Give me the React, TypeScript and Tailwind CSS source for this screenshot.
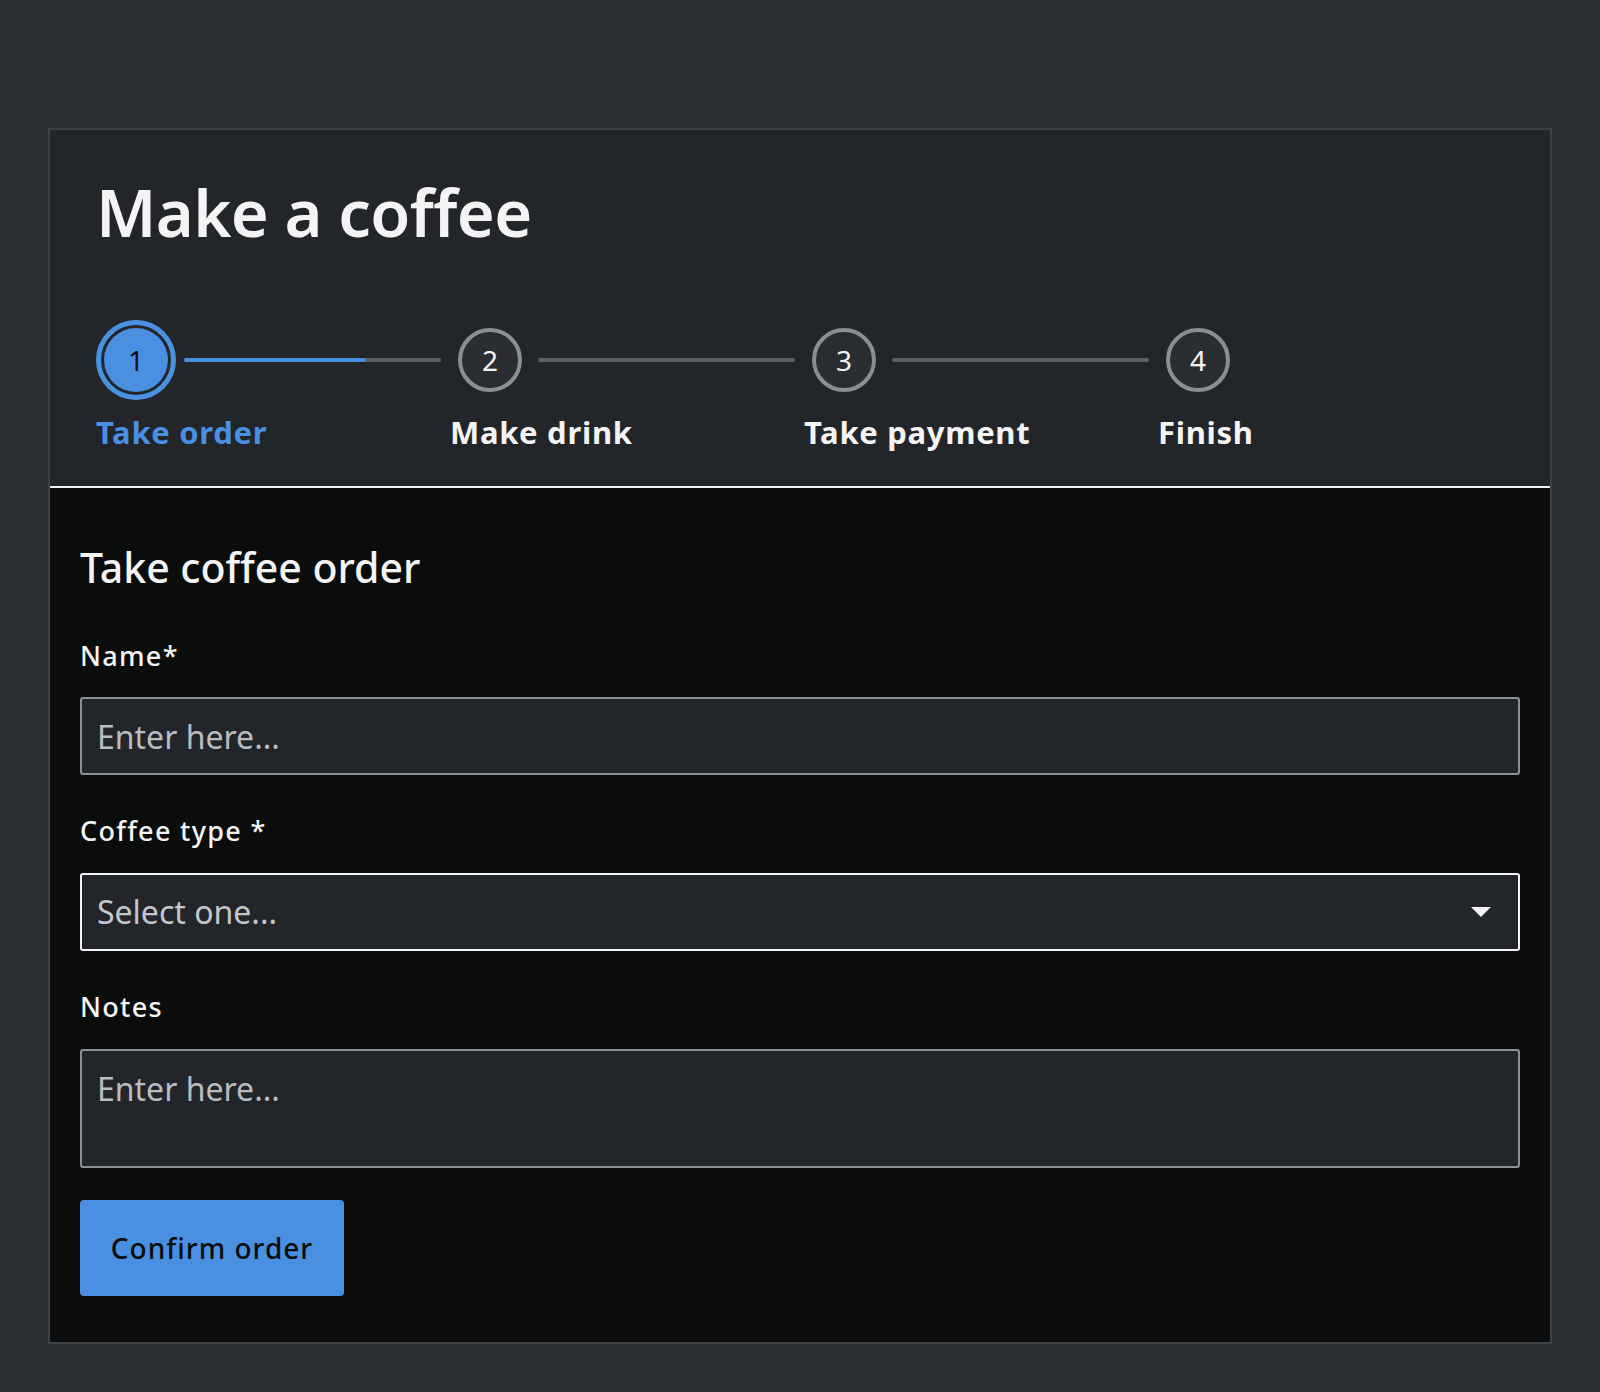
import { useState } from "react";

const font = { fontFamily: '"Noto Sans", "Open Sans", sans-serif' };

const steps = ["Take order", "Make drink", "Take payment", "Finish"];

const StepCircle = ({ index, active }: { index: number; active: boolean }) =>
  active ? (
    <div className="ml-2 flex size-16 shrink-0 items-center justify-center rounded-full bg-[#4a90e2] text-[28px] leading-none text-[#0b0d0d] outline-[5px] outline-offset-[3px] outline-solid outline-[#4a90e2]">
      {index + 1}
    </div>
  ) : (
    <div className="ml-2 flex size-16 shrink-0 items-center justify-center rounded-full border-4 border-[#8a8f96] bg-[#2a2d32] text-[28px] leading-none text-[#f4f4f4]">
      {index + 1}
    </div>
  );

const Stepper = ({ current }: { current: number }) => (
  <div>
    <div className="mt-[76px] flex items-center">
      {steps.map((label, i) => (
        <div
          className={i < steps.length - 1 ? "flex w-[354px] items-center" : "flex items-center"}
          key={label}
        >
          <StepCircle active={i === current} index={i} />
          {i < steps.length - 1 && (
            <div className="ml-4 mr-[9px] h-1 flex-1 overflow-hidden rounded-full bg-[#5a5f66]">
              {i === current && (
                <div className="h-full w-[71%] rounded-full bg-[#4a90e2]" />
              )}
            </div>
          )}
        </div>
      ))}
    </div>
    <div className="mt-5 flex">
      {steps.map((label, i) => (
        <div
          className={
            i === current
              ? "w-[354px] text-[31px] font-bold leading-[40px] tracking-[0.7px] text-[#4a90e2]"
              : "w-[354px] text-[31px] font-bold leading-[40px] tracking-[0.7px] text-[#f4f4f4]"
          }
          key={label}
        >
          {label}
        </div>
      ))}
    </div>
  </div>
);

const Label = ({ children, className }: { children: string; className: string }) => (
  <label className={`block text-[27px] font-medium leading-[36px] tracking-[1.3px] text-[#f4f4f4] ${className}`}>
    {children}
  </label>
);

export default function App() {
  const [name, setName] = useState("");
  const [coffee, setCoffee] = useState("");
  const [notes, setNotes] = useState("");

  return (
    <div className="min-h-screen bg-[#2c2f34] px-12 pb-12 pt-32" style={font}>
      <div className="border-2 border-[#3d4046]">
        <div className="border-b-2 border-[#f0f0f0] bg-[#222529] pb-[34px] pl-[46px] pt-[42px]">
          <h1 className="text-[65px] font-semibold leading-[80px] tracking-[-0.6px] text-[#f4f4f4]">
            Make a coffee
          </h1>
          <Stepper current={0} />
        </div>

        <div className="bg-[#0b0d0d] px-[30px] pb-[46px] pt-[51px]">
          <h2 className="text-[41px] font-medium leading-[56px] text-[#f4f4f4]">
            Take coffee order
          </h2>

          <Label className="mt-[43px]">Name*</Label>
          <input
            className="mt-[23px] block h-[78px] w-full rounded-[3px] border-2 border-[#8a8f96] bg-[#222529] px-[15px] text-[32px] text-[#f4f4f4] outline-none placeholder:text-[#b9bdc2]"
            onChange={(e) => setName(e.target.value)}
            placeholder="Enter here..."
            value={name}
          />

          <Label className="mt-[38px]">Coffee type *</Label>
          <div className="relative mt-6">
            <select
              className="block h-[78px] w-full appearance-none rounded-[3px] border-2 border-[#f4f4f4] bg-[#222529] px-[15px] text-[32px] text-[#c3c7cc] outline-none"
              onChange={(e) => setCoffee(e.target.value)}
              value={coffee}
            >
              <option value="">Select one...</option>
              <option value="espresso">Espresso</option>
              <option value="latte">Latte</option>
              <option value="cappuccino">Cappuccino</option>
              <option value="flat-white">Flat white</option>
            </select>
            <svg
              className="pointer-events-none absolute right-[29px] top-1/2 -translate-y-1/2"
              height="10"
              viewBox="0 0 20 10"
              width="20"
            >
              <path d="M0 0h20L10 10z" fill="#f4f4f4" />
            </svg>
          </div>

          <Label className="mt-[38px]">Notes</Label>
          <textarea
            className="mt-6 block h-[119px] w-full resize-none rounded-[3px] border-2 border-[#8a8f96] bg-[#222529] px-[15px] pt-[14px] text-[32px] leading-[48px] text-[#f4f4f4] outline-none placeholder:text-[#b9bdc2]"
            onChange={(e) => setNotes(e.target.value)}
            placeholder="Enter here..."
            value={notes}
          />

          <button
            className="mt-8 flex h-[96px] w-[264px] items-center justify-center rounded-[4px] bg-[#4a90e2] text-[28px] font-medium tracking-[1px] text-[#0b0d0d]"
            type="button"
          >
            Confirm order
          </button>
        </div>
      </div>
    </div>
  );
}
